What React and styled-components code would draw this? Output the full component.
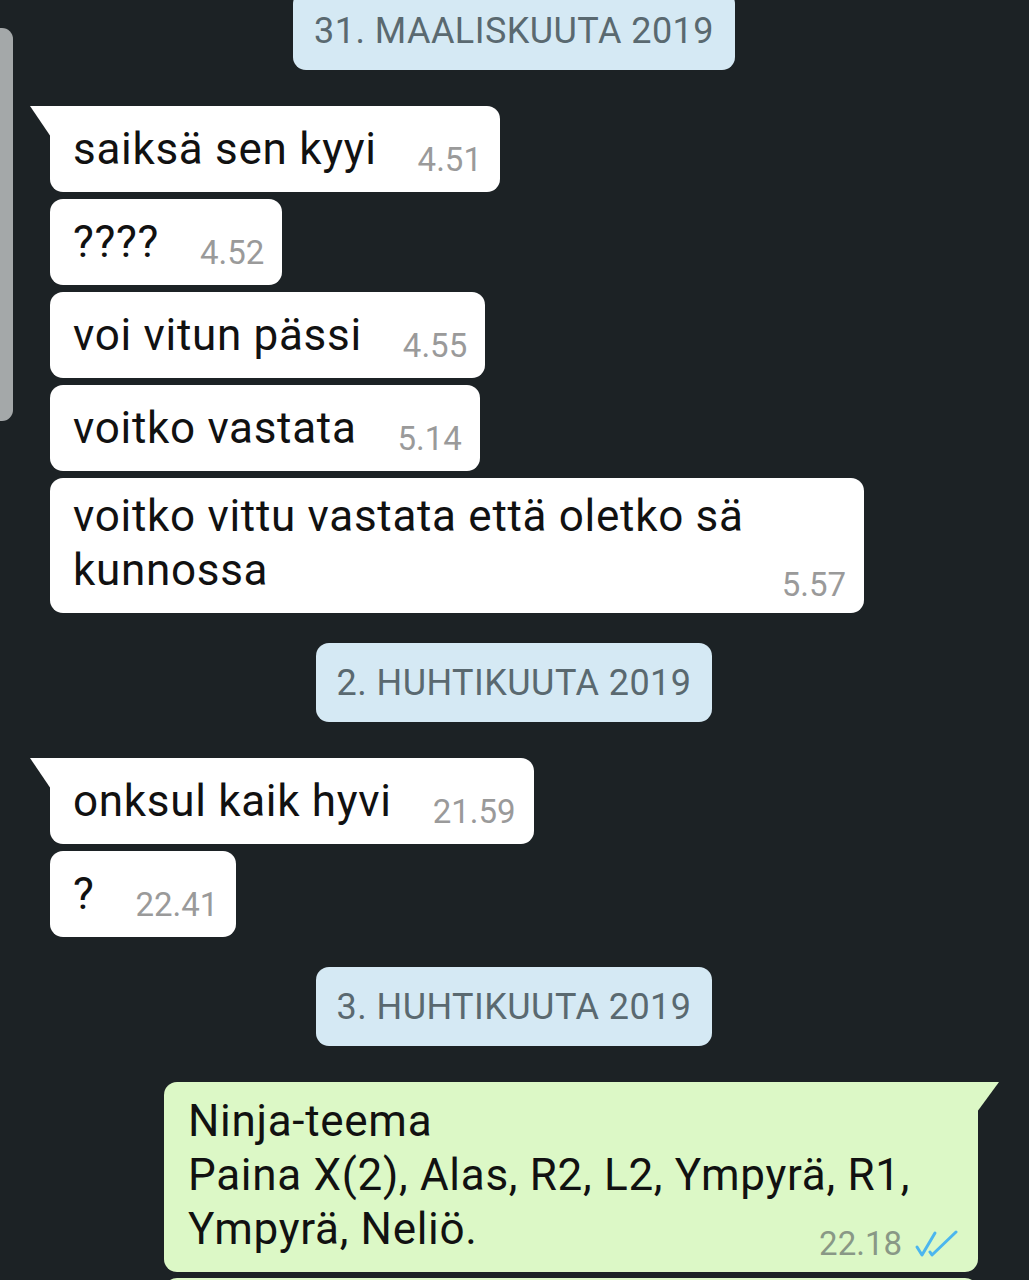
import React from 'react'
import styled, { createGlobalStyle, css } from 'styled-components'

const GlobalStyle = createGlobalStyle`
    html, body {
        margin: 0;
        padding: 0;
        background: #1c2225;
        overflow: hidden;
    }
    body {
        font-family: Roboto, "Noto Sans", "Liberation Sans", sans-serif;
    }
`;

const Screen = styled.div`
    position: relative;
    width: 1029px;
    height: 1280px;
    overflow: hidden;
    background: #1c2225;
`;

// scroll indicator sits over the chat on the left edge
const ScrollThumb = styled.div`
    position: absolute;
    left: 0;
    top: 28px;
    width: 13px;
    height: 393px;
    background: #a4a8a9;
    border-radius: 0 11px 11px 0;
`;

const Feed = styled.div`
    display: flex;
    flex-direction: column;
    padding: 0 51px 0 50px;
    margin-top: -9px;
`;

const DatePill = styled.div`
    align-self: center;
    height: 79px;
    display: flex;
    align-items: center;
    padding: 0 21px;
    margin: 30px 0 36px;
    background: #d5e9f4;
    color: #5a6970;
    font-size: 36px;
    letter-spacing: 0.45px;
    border-radius: 13px;
    box-sizing: border-box;
    &:first-child{ margin-top: 0; }
`;

const Bubble = styled.div`
    position: relative;
    display: flex;
    align-items: flex-end;
    box-sizing: border-box;
    background: ${p => p.$out ? '#dcf8c6' : '#ffffff'};
    color: #111;
    border-radius: 13px;
    padding: 16px 18px 16px 23px;
    align-self: ${p => p.$out ? 'flex-end' : 'flex-start'};
    & + &{ margin-top: 7px; }

    ${p => p.$stacked && css`
        flex-direction: column;
        width: 814px;
        padding: 11px 18px 12px 23px;
    `}
    ${p => p.$out && css`
        padding: 12px 20px 12px 24px;
    `}

    ${p => p.$tail && !p.$out && css`
        border-top-left-radius: 0;
        &::before{
            content: "";
            position: absolute;
            top: 0;
            left: -20px;
            width: 21px;
            height: 31px;
            background: #ffffff;
            clip-path: polygon(0 0, 100% 0, 100% 100%);
        }
    `}
    ${p => p.$tail && p.$out && css`
        border-top-right-radius: 0;
        &::before{
            content: "";
            position: absolute;
            top: 0;
            right: -21px;
            width: 22px;
            height: 30px;
            background: #dcf8c6;
            clip-path: polygon(0 0, 100% 0, 0 100%);
        }
    `}
`;

// the next outgoing bubble, only its top edge shows at the bottom of the screen
const NextBubble = styled.div`
    align-self: flex-end;
    width: 814px;
    height: 86px;
    margin-top: 6px;
    background: #dcf8c6;
    border-radius: 13px;
`;

const Text = styled.div`
    font-size: 44px;
    line-height: 54px;
    letter-spacing: 0.7px;
    white-space: nowrap;
    align-self: ${p => p.$stacked ? 'flex-start' : 'auto'};
`;

const Time = styled.div`
    display: flex;
    align-items: center;
    gap: 12px;
    font-size: 33px;
    line-height: 32px;
    height: 32px;
    color: ${p => p.$out ? '#899886' : '#9a9a9a'};
    margin-left: 41px;
    ${p => p.$stacked && css`
        align-self: flex-end;
        margin-top: -28px;
        margin-left: 0;
    `}
`;

const Ticks = () => (
    <svg width="44" height="28" viewBox="0 0 44 28" fill="none"
        stroke="#4cb6ee" strokeWidth="3" strokeLinecap="round" strokeLinejoin="round">
        <path d="M3 17 L8 25 L21 3" />
        <path d="M16 22 L18 25 L42 2" />
    </svg>
);

const received = [
    { date: '31. MAALISKUUTA 2019', msgs: [
        { text: 'saiksä sen kyyi', time: '4.51' },
        { text: '????', time: '4.52' },
        { text: 'voi vitun pässi', time: '4.55' },
        { text: 'voitko vastata', time: '5.14' },
        { lines: ['voitko vittu vastata että oletko sä', 'kunnossa'], time: '5.57' },
    ]},
    { date: '2. HUHTIKUUTA 2019', msgs: [
        { text: 'onksul kaik hyvi', time: '21.59' },
        { text: '?', time: '22.41' },
    ]},
];

const Message = ({ m, tail }) => {
    if (m.lines) {
        return (
            <Bubble $stacked $tail={tail}>
                <Text $stacked>{m.lines.map((l, i) => <div key={i}>{l}</div>)}</Text>
                <Time $stacked>{m.time}</Time>
            </Bubble>
        )
    }
    return (
        <Bubble $tail={tail}>
            <Text>{m.text}</Text>
            <Time>{m.time}</Time>
        </Bubble>
    )
}

const App = () => {
    return (
        <>
            <GlobalStyle />
            <Screen>
                <Feed>
                    {received.map(group => (
                        <React.Fragment key={group.date}>
                            <DatePill>{group.date}</DatePill>
                            {group.msgs.map((m, i) => <Message key={i} m={m} tail={i === 0} />)}
                        </React.Fragment>
                    ))}

                    <DatePill>3. HUHTIKUUTA 2019</DatePill>
                    <Bubble $out $stacked $tail>
                        <Text $stacked>
                            <div>Ninja-teema</div>
                            <div>Paina X(2), Alas, R2, L2, Ympyrä, R1,</div>
                            <div>Ympyrä, Neliö.</div>
                        </Text>
                        <Time $out $stacked>22.18 <Ticks /></Time>
                    </Bubble>
                    <NextBubble />
                </Feed>
                <ScrollThumb />
            </Screen>
        </>
    )
}

export default App;
